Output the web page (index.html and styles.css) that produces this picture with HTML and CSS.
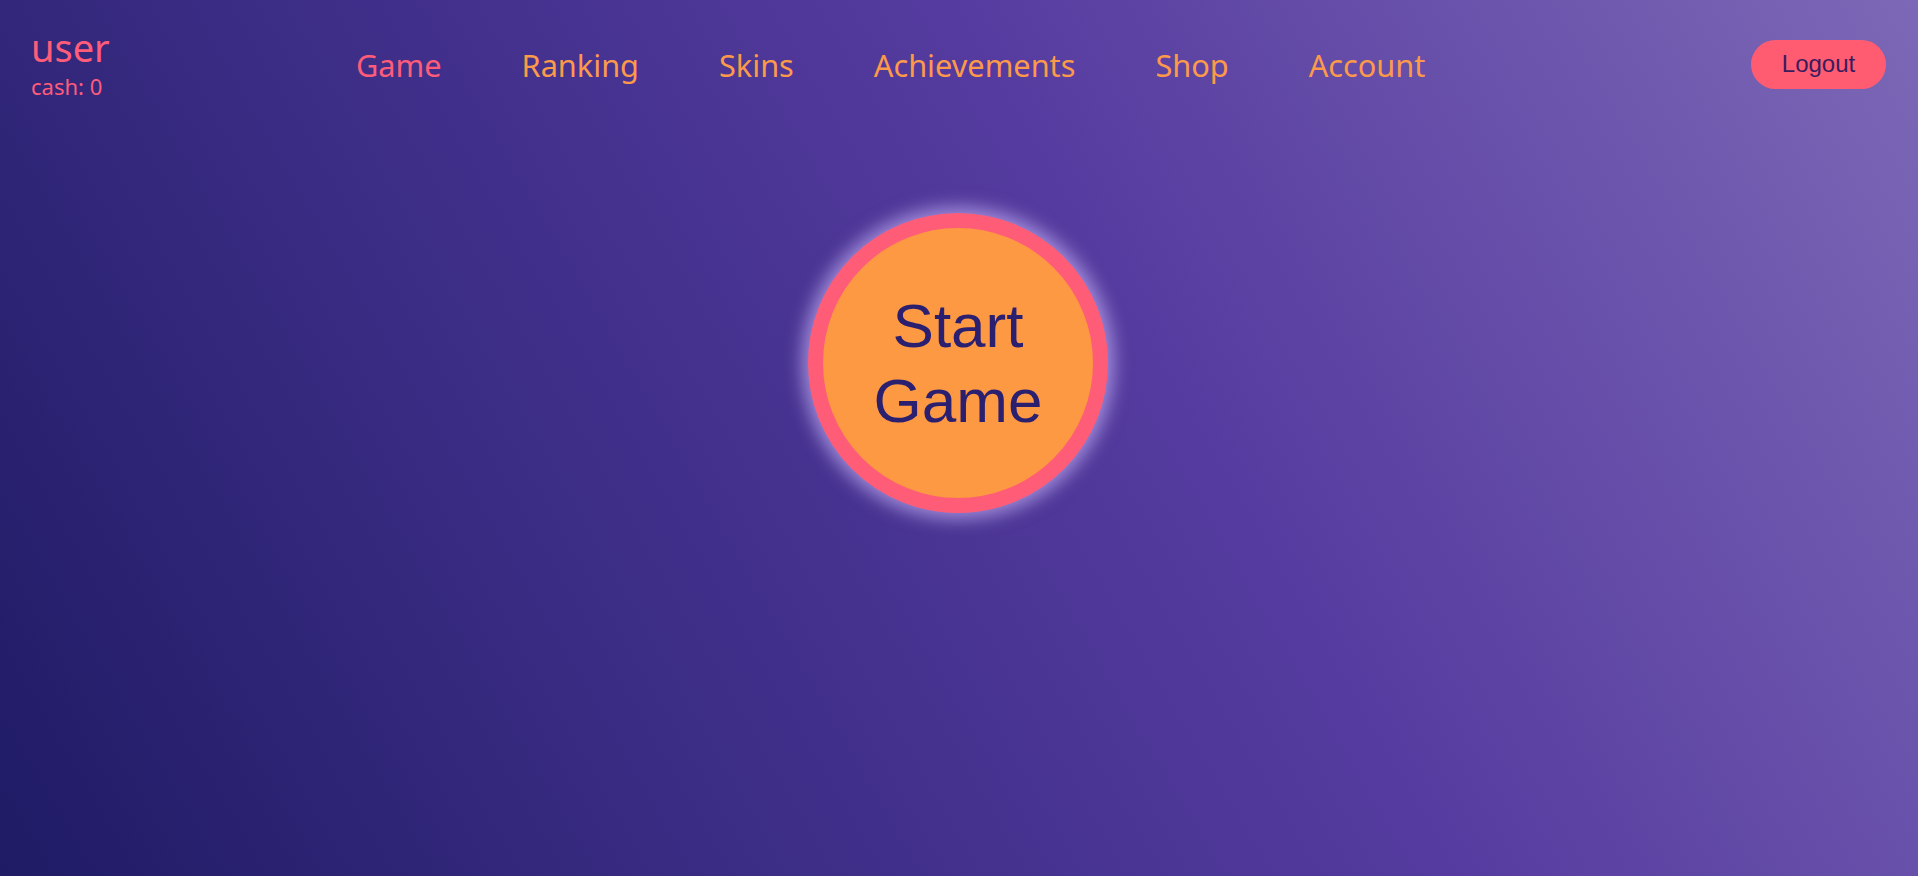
FILE: index.html
```html
<!DOCTYPE html>
<html lang="en">
<head>
<meta charset="utf-8">
<title>Game</title>
<link rel="stylesheet" href="styles.css">
</head>
<body>
<div class="page">
  <header class="header">
    <div class="user-block">
      <div class="username">user</div>
      <div class="cash">cash: 0</div>
    </div>
    <nav class="nav">
      <a class="nav-link active" href="#">Game</a>
      <a class="nav-link" href="#">Ranking</a>
      <a class="nav-link" href="#">Skins</a>
      <a class="nav-link" href="#">Achievements</a>
      <a class="nav-link" href="#">Shop</a>
      <a class="nav-link" href="#">Account</a>
    </nav>
    <button class="logout">Logout</button>
  </header>
  <main class="main">
    <button class="start">Start<br>Game</button>
  </main>
</div>
</body>
</html>
```
FILE: styles.css
```css
* { box-sizing: border-box; }
html, body { margin: 0; padding: 0; height: 100%; }
body {
  font-family: "Noto Sans", "Open Sans", sans-serif;
  background: linear-gradient(60deg, #1f1b64 0%, #3a2c84 30%, #553b9f 60%, #7c68b6 100%);
  min-height: 100vh;
  overflow: hidden;
}
.page { min-height: 100vh; }
.header {
  display: flex;
  align-items: center;
  height: 128px;
  padding: 0 32px 0 31px;
}
.user-block {
  flex: 0 0 325px;
  display: flex;
  flex-direction: column;
  margin-top: 0;
}
.username {
  color: #ff5c7a;
  font-size: 38px;
  line-height: 38px;
}
.cash {
  color: #ff5c7a;
  font-size: 22px;
  line-height: 28px;
  margin-top: 6px;
}
.nav {
  display: flex;
  gap: 80px;
  align-items: center;
  margin-top: 2px;
}
.nav-link {
  color: #fd9a4a;
  font-size: 30.7px;
  text-decoration: none;
  line-height: 40px;
}
.nav-link.active { color: #ff5c7a; }
.logout {
  margin-left: auto;
  background: #ff5c72;
  color: #3a1b5e;
  border: none;
  border-radius: 25px;
  font-family: "Liberation Sans", Arial, sans-serif;
  font-size: 24px;
  width: 135px;
  height: 49px;
  padding: 0;
}
.main {
  display: flex;
  justify-content: center;
  padding-top: 85px;
}
.start {
  width: 300px;
  height: 300px;
  border-radius: 50%;
  border: 15px solid #ff5c77;
  background: #fd9843;
  color: #2b2070;
  font-family: "Liberation Sans", Arial, sans-serif;
  font-size: 62px;
  line-height: 75px;
  padding: 0;
  box-shadow: 0 0 18px 6px rgba(190, 170, 240, 0.75);
  margin-left: -2px;
}
```
